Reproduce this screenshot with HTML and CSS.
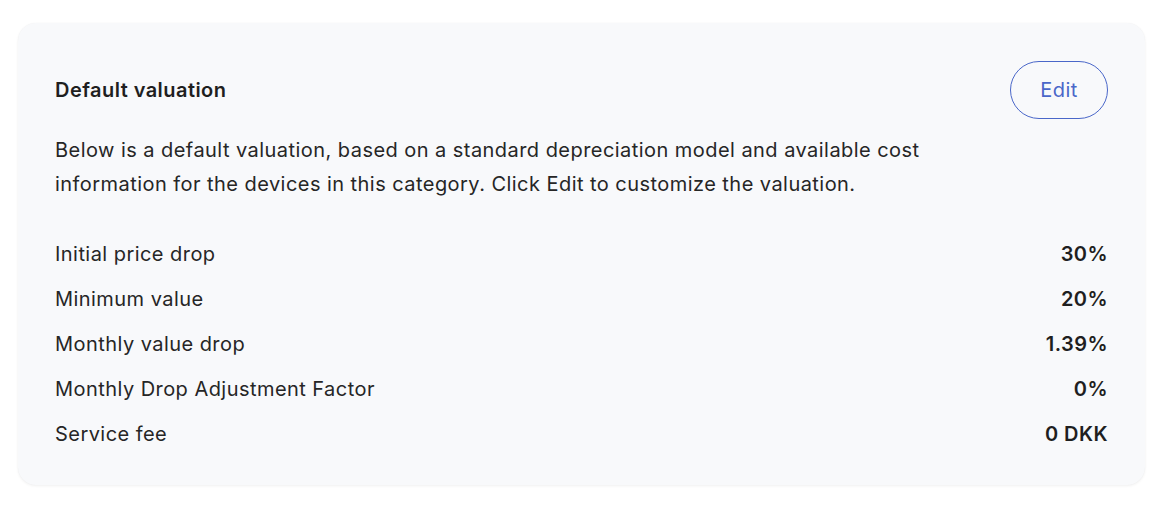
FILE: index.html
```html
<!DOCTYPE html>
<html lang="en">
<head>
<meta charset="utf-8">
<title>Default valuation</title>
<link rel="stylesheet" href="styles.css">
</head>
<body>
<main class="page">
  <section class="card">
    <header class="card-head">
      <h2 class="card-title">Default valuation</h2>
      <button class="btn-edit" type="button">Edit</button>
    </header>
    <p class="card-desc">Below is a default valuation, based on a standard depreciation model and available cost information for the devices in this category. Click Edit to customize the valuation.</p>
    <dl class="rows">
      <div class="row"><dt>Initial price drop</dt><dd>30%</dd></div>
      <div class="row"><dt>Minimum value</dt><dd>20%</dd></div>
      <div class="row"><dt>Monthly value drop</dt><dd>1.39%</dd></div>
      <div class="row"><dt>Monthly Drop Adjustment Factor</dt><dd>0%</dd></div>
      <div class="row"><dt>Service fee</dt><dd>0 DKK</dd></div>
    </dl>
  </section>
</main>
</body>
</html>
```

FILE: styles.css
```css
* { box-sizing: border-box; }
html, body { margin: 0; padding: 0; background: #ffffff; }
body {
  font-family: Inter, "Noto Sans", "Liberation Sans", sans-serif;
  color: #1f1f1f;
  letter-spacing: 0.45px;
}
.page {
  padding: 23px 19px 22px 18px;
}
.card {
  background: #f8f9fb;
  border-radius: 18px;
  box-shadow: 0 1px 3px rgba(0, 0, 0, 0.06), 0 0 1px rgba(0, 0, 0, 0.05);
  padding: 38px 37px 29px 37px;
}
.card-head {
  display: flex;
  align-items: center;
  justify-content: space-between;
}
.card-title {
  margin: 0;
  font-size: 20px;
  font-weight: 600;
  color: #1f1f1f;
}
.btn-edit {
  font-family: inherit;
  font-size: 20px;
  letter-spacing: 0.45px;
  color: #4a67c9;
  background: transparent;
  border: 1.3px solid #4a67c9;
  border-radius: 29px;
  width: 98px;
  height: 58px;
  padding: 0;
  cursor: pointer;
}
.card-desc {
  margin: 14px 0 0 0;
  font-size: 20px;
  line-height: 34px;
  max-width: 890px;
  color: #262626;
}
.rows {
  margin: 30px 0 0 0;
  display: flex;
  flex-direction: column;
}
.row {
  display: flex;
  justify-content: space-between;
  align-items: center;
  height: 45px;
  font-size: 20px;
}
.row dt { margin: 0; color: #262626; }
.row dd { margin: 0; font-weight: 600; color: #1f1f1f; }
```
